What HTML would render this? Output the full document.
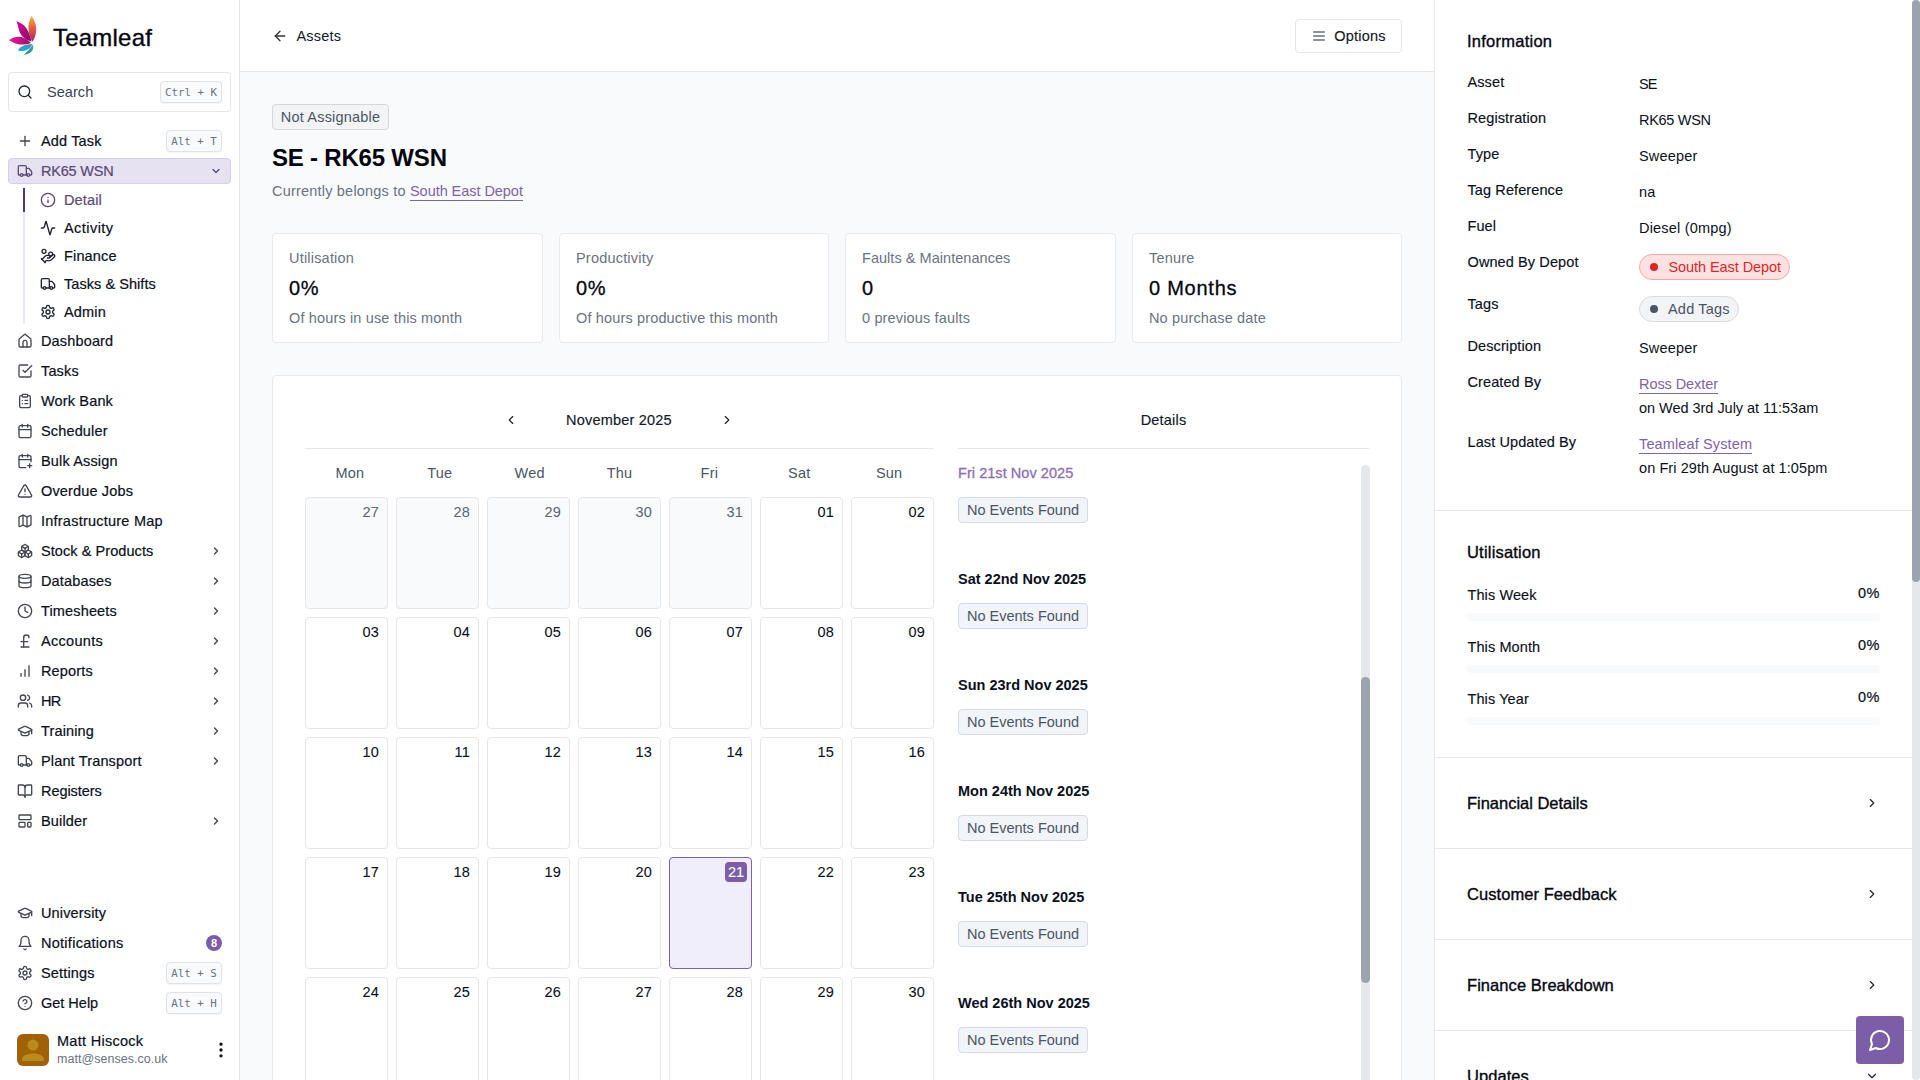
<!DOCTYPE html>
<html lang="en">
<head>
<meta charset="utf-8">
<title>SE - RK65 WSN | Teamleaf</title>
<style>
*{box-sizing:border-box;margin:0;padding:0}
html,body{width:1920px;height:1080px;overflow:hidden;background:#fff}
body{font-family:"Liberation Sans",Arial,sans-serif;font-size:14px;color:#0b1020;position:relative;-webkit-font-smoothing:antialiased}
svg.i{width:16px;height:16px;fill:none;stroke:currentColor;stroke-width:2;stroke-linecap:round;stroke-linejoin:round;display:block;flex:none}
a{color:inherit;text-decoration:none}
.abs{position:absolute}

/* ---------- sidebar ---------- */
#side{position:absolute;left:0;top:0;width:240px;height:1080px;background:#fff;border-right:1px solid #e5e7eb}
#logo{position:absolute;left:8px;top:14px}
#brand{position:absolute;left:53px;top:24px;font-size:24px;line-height:28px;color:#05060f;letter-spacing:.22px;-webkit-text-stroke:.35px #05060f}
#search{position:absolute;left:8px;top:72px;width:223px;height:40px;border:1px solid #e5e7eb;border-radius:4px;background:#fff}
#search svg{position:absolute;left:7.500px;top:11px;color:#1f2430}
#search span.t{position:absolute;left:38px;top:10px;line-height:18px;font-size:14.5px;color:#3b4254;letter-spacing:.05px}
kbd{position:absolute;font-family:"DejaVu Sans Mono","Liberation Mono",monospace;font-size:10.800px;line-height:21.500px;height:22px;border:1px solid #dfe2e8;border-radius:4px;background:#f9fafb;color:#6b7280;text-align:center;white-space:pre;box-shadow:0 1px 1px rgba(0,0,0,.04)}
.nav{position:absolute;left:8px;width:223px;height:28px;display:flex;align-items:center;padding-left:9px;color:#0b1020;font-size:14.5px;letter-spacing:.15px;white-space:nowrap;-webkit-text-stroke:.2px currentColor}
.nav svg.i{margin-right:8px;color:#44474f}
.nav svg.chev{position:absolute;right:9px;top:8px;width:12px;height:12px;color:#4a4e57;margin:0;stroke-width:3}
.nav.act svg.chev{right:7.900px;top:5.800px;color:#75668f;stroke-width:2.600}
.nav.sub{left:31px;width:200px}
.nav.sub svg.i{margin-right:8px;color:#1f2430}
.nav.act{background:#e6e2f1;border:1px solid #d5cde9;border-radius:4px;color:#5a4a78}
.nav.act svg.i{color:#5a4a78}
#subline{position:absolute;left:23px;top:188px;width:2px;height:136px;background:#e9eaf1}
#subline b{position:absolute;left:0;top:0;width:2px;height:24px;background:#4e3b73;display:block}
#badge8{position:absolute;left:206px;top:935px;width:16px;height:16px;border-radius:8px;background:#7b5ea7;color:#fff;font-size:11px;line-height:16px;text-align:center;font-weight:bold}
#avatar{position:absolute;left:17px;top:1034px;width:32px;height:32px;border-radius:6px;background:#a16207;overflow:hidden}
#uname{position:absolute;left:57px;top:1032px;font-size:14.5px;line-height:18px;color:#0b1020;letter-spacing:.28px;-webkit-text-stroke:.2px currentColor}
#umail{position:absolute;left:57px;top:1051px;font-size:12.5px;line-height:16px;color:#6b7280;letter-spacing:.04px}
#dots{position:absolute;left:210.700px;top:1040.400px;color:#111;width:20px !important;height:20px !important}

/* ---------- main ---------- */
#main{position:absolute;left:240px;top:0;width:1195px;height:1080px;background:#f9fafb;overflow:hidden}
#top{position:absolute;left:0;top:0;width:1195px;height:72px;background:#fff;border-bottom:1px solid #e5e7eb}

.back{position:absolute;left:32px;top:26px;height:20px;display:flex;align-items:center;font-size:14.5px;color:#111827;letter-spacing:.2px}
.back svg{width:16px;height:16px;margin-right:8.500px;color:#333}
.optbtn{position:absolute;left:1055px;top:19px;width:107px;height:34px;border:1px solid #e5e7eb;border-radius:4px;background:#fff;display:flex;align-items:center;justify-content:center;font-size:14.5px;color:#111827;letter-spacing:.2px;-webkit-text-stroke:.15px currentColor}
.optbtn svg{width:16px;height:16px;margin-right:7px;color:#6a6d75;stroke-width:2.200}
.pill-na{position:absolute;left:32px;top:104px;width:117px;height:26px;border:1px solid #d4d7dc;border-radius:4px;background:#f3f4f6;color:#4b5563;font-size:14.5px;line-height:24px;text-align:center;letter-spacing:.2px}
#title{position:absolute;left:32px;top:142px;font-size:24px;line-height:32px;font-weight:bold;color:#05060f;letter-spacing:-.2px;white-space:nowrap}
#belongs{position:absolute;left:32px;top:181px;font-size:14.5px;line-height:20px;color:#6b7280;letter-spacing:.2px;white-space:nowrap}
.lnk{color:#7d63a8;border-bottom:1px solid #7d63a8;padding-bottom:1px}
.stat{position:absolute;top:233px;width:271px;height:110px;background:#fff;border:1px solid #e7e9ed;border-radius:4px}
.stat .l{position:absolute;left:16px;top:14px;font-size:14.5px;line-height:20px;color:#6b7280;letter-spacing:.2px;white-space:nowrap}
.stat .v{position:absolute;left:16px;top:40px;font-size:20px;line-height:28px;color:#05060f;letter-spacing:.75px;white-space:nowrap;-webkit-text-stroke:.3px currentColor}
.stat .s{position:absolute;left:16px;top:74px;font-size:14.5px;line-height:20px;color:#6b7280;letter-spacing:.15px;white-space:nowrap}
#calcard{position:absolute;left:32px;top:375px;width:1130px;height:760px;background:#fff;border:1px solid #e7e9ed;border-radius:4px}
.calhead{text-align:center;font-size:14.5px;line-height:20px;color:#111827;letter-spacing:.2px;-webkit-text-stroke:.15px currentColor}
.hr{height:1px;background:#e5e7eb}
.dow{display:flex;width:629px}
.dow span{flex:1;text-align:center;font-size:14.5px;line-height:20px;color:#4b5563;letter-spacing:.2px}
#grid{position:absolute;left:32px;top:121px;width:640px;display:flex;flex-wrap:wrap}
.c{width:83px;height:112px;margin:0 8px 8px 0;border:1px solid #e5e7eb;border-radius:4px;background:#fff;text-align:right;padding:4px 8px 0 0;font-size:14.5px;line-height:20px;color:#0b1020;letter-spacing:.2px;-webkit-text-stroke:.08px currentColor}
.c.o{background:#f9fafb;color:#5b6472;-webkit-text-stroke:0}
.c.t{background:#f0eefa;border-color:#7d63a8;padding:4px 4px 0 0}
.c.t b{display:inline-block;width:22px;height:20px;border-radius:4px;background:#7b5ea7;color:#fff;font-weight:normal;text-align:center;line-height:20px;letter-spacing:0}
#evlist{position:absolute;left:685px;top:87px}
.ev{height:106px}
.ev .d{font-size:14.5px;line-height:20px;font-weight:bold;color:#0b1020;letter-spacing:0;white-space:nowrap}
.ev .d.first{font-weight:normal;color:#8b6fb5;-webkit-text-stroke:.3px currentColor;letter-spacing:.05px}
.ne{display:block;margin-top:14px;width:130px;height:26px;border:1px solid #d5dbe5;border-radius:4px;background:#f1f4f9;color:#4b5563;font-size:14.5px;line-height:24px;text-align:center;letter-spacing:0}
#evscroll{position:absolute;left:1087.500px;top:89px;width:9px;height:700px;background:#e5e7eb;border-radius:5px 5px 0 0}
#evscroll b{display:block;position:absolute;left:0;top:212px;width:9px;height:306px;background:#9ca3af;border-radius:5px}

/* ---------- right ---------- */
#right{position:absolute;left:1434px;top:0;width:478px;height:1080px;background:#fff;border-left:1px solid #e5e7eb;overflow:hidden}
#vscroll{position:absolute;left:1912px;top:0;width:8px;height:1080px;background:#e5e7eb;border-radius:4px}
#vscroll b{position:absolute;left:0;top:0;width:8px;height:582px;background:#9ca3af;border-radius:4px;display:block}
#right .h{position:absolute;left:32px;font-size:16.5px;line-height:24px;color:#05060f;letter-spacing:.06px;white-space:nowrap;-webkit-text-stroke:.35px currentColor}
#right .k{position:absolute;left:32.500px;font-size:14.5px;line-height:20px;color:#0b1020;letter-spacing:.1px;white-space:nowrap;-webkit-text-stroke:.15px currentColor}
#right .val{position:absolute;left:204px;font-size:14.5px;line-height:20px;color:#0b1020;letter-spacing:.2px;white-space:nowrap}
#right .pct{position:absolute;right:32px;font-size:14.5px;line-height:20px;color:#0b1020;letter-spacing:.5px;white-space:nowrap;-webkit-text-stroke:.2px currentColor}
#right .bar{position:absolute;left:32px;width:413px;height:8px;border-radius:4px;background:#f8f9fb}
#right .sep{position:absolute;left:0;width:478px;height:1px;background:#e5e7eb}
#right .ch{position:absolute;left:430px;width:14px;height:14px;color:#1f2430;stroke-width:2}
.tag{position:absolute;left:204px;height:26px;border-radius:13px;font-size:14.5px;line-height:24px;letter-spacing:.2px;white-space:nowrap;padding-left:29px}
.tag i{position:absolute;left:10px;top:8px;width:8px;height:8px;border-radius:4px;display:block}
.tag.red{background:#fee2e2;border:1px solid #fca5a5;color:#dc2626}
.tag.red i{background:#dc2626}
.tag.grey{background:#f3f4f6;border:1px solid #d9dce1;color:#4b5563}
.tag.grey i{background:#4b5563}
#chat{position:absolute;left:1856px;top:1016px;width:48px;height:48px;border-radius:4px;background:#7b5ea7;color:#fff}
#chat svg{position:absolute;left:12px;top:12px;width:24px;height:24px;stroke-width:2}
</style>
</head>
<body>

<!-- ================= SIDEBAR ================= -->
<div id="side">
  <svg id="logo" width="36" height="44" viewBox="0 0 36 44">
    <defs>
      <linearGradient id="g1" x1="0" y1="0" x2="0" y2="1"><stop offset="0" stop-color="#fbb034"/><stop offset=".45" stop-color="#e8613c"/><stop offset="1" stop-color="#b3206a"/></linearGradient>
      <linearGradient id="g2" x1="0" y1="0" x2="1" y2="1"><stop offset="0" stop-color="#e6009a"/><stop offset="1" stop-color="#7a1560"/></linearGradient>
      <linearGradient id="g3" x1="0" y1="0" x2="1" y2="0"><stop offset="0" stop-color="#f012b0"/><stop offset="1" stop-color="#a0125f"/></linearGradient>
      <linearGradient id="g4" x1="0" y1="0" x2="1" y2="0"><stop offset="0" stop-color="#19b5e0"/><stop offset="1" stop-color="#3f93b0"/></linearGradient>
      <linearGradient id="g5" x1="0" y1="1" x2="1" y2="0"><stop offset="0" stop-color="#0f8f86"/><stop offset="1" stop-color="#3aa0c4"/></linearGradient>
    </defs>
    <path d="M23.5 2 C27.2 7 29.8 14 27.2 22 C26.2 25 25.2 27 24.400 27.600 C20.300 21 18.600 11 23.500 2Z" fill="url(#g1)"/>
    <path d="M8.3 7.3 C14 9 18.5 13 20.5 18 C22 22 23 25 23.6 27.6 C17 26 12.5 21.5 11 16 C10 12.5 9.5 9.5 8.3 7.3Z" fill="url(#g2)"/>
    <path d="M0.8 26.3 C6 22.5 12 22 16 24 C19 25.5 21.5 27.5 23 29 C17 31.2 11 31 7 29.3 C4.5 28.2 2.5 27 0.8 26.3Z" fill="url(#g3)"/>
    <path d="M9.900 36.400 C12.500 32 17 30.300 24.500 30 C22.500 35 17.500 38.200 9.900 36.400Z" fill="url(#g4)"/>
    <path d="M15.900 40.800 C18.500 38.500 22 35 25 30.600 C26.300 35.500 23.500 40.200 15.900 40.800Z" fill="url(#g5)"/>
  </svg>
  <div id="brand">Teamleaf</div>

  <div id="search">
    <svg class="i" viewBox="0 0 24 24"><circle cx="11" cy="11" r="8"/><path d="m21 21-4.3-4.3"/></svg>
    <span class="t">Search</span>
    <kbd style="left:151px;top:8px;width:62px">Ctrl + K</kbd>
  </div>

  <div class="nav" style="top:127px"><svg class="i" viewBox="0 0 24 24"><path d="M5 12h14"/><path d="M12 5v14"/></svg>Add Task</div>
  <kbd style="left:166px;top:130px;width:56px">Alt + T</kbd>

  <div class="nav act" style="top:158px;height:26px;padding-left:8px;letter-spacing:-.2px"><svg class="i" viewBox="0 0 24 24"><path d="M14 18V6a2 2 0 0 0-2-2H4a2 2 0 0 0-2 2v11a1 1 0 0 0 1 1h2"/><path d="M15 18H9"/><path d="M19 18h2a1 1 0 0 0 1-1v-3.65a1 1 0 0 0-.22-.624l-3.48-4.35A1 1 0 0 0 17.52 8H14"/><circle cx="17" cy="18" r="2"/><circle cx="7" cy="18" r="2"/></svg>RK65 WSN<svg class="i chev" viewBox="0 0 24 24"><path d="m6 9 6 6 6-6"/></svg></div>

  <div id="subline"><b></b></div>
  <div class="nav sub" style="top:186px;color:#5a4a78"><svg class="i" style="color:#5a4a78" viewBox="0 0 24 24"><circle cx="12" cy="12" r="10"/><path d="M12 16v-4"/><path d="M12 8h.01"/></svg>Detail</div>
  <div class="nav sub" style="top:214px"><svg class="i" viewBox="0 0 24 24"><path d="M22 12h-2.48a2 2 0 0 0-1.93 1.46l-2.35 8.36a.25.25 0 0 1-.48 0L9.24 2.18a.25.25 0 0 0-.48 0l-2.35 8.36A2 2 0 0 1 4.49 12H2"/></svg><span style="letter-spacing:.45px">Activity</span></div>
  <div class="nav sub" style="top:242px"><svg class="i" viewBox="0 0 24 24"><path d="M11 15h2a2 2 0 1 0 0-4h-3c-.6 0-1.1.2-1.4.6L3 17"/><path d="m7 21 1.6-1.4c.3-.4.8-.6 1.4-.6h4c1.1 0 2.100-.4 2.800-1.200l4.600-4.400a2 2 0 0 0-2.750-2.910l-4.200 3.900"/><path d="m2 16 6 6"/><circle cx="16" cy="9" r="2.900"/><circle cx="6" cy="5" r="3"/></svg>Finance</div>
  <div class="nav sub" style="top:270px"><svg class="i" viewBox="0 0 24 24"><path d="M14 18V6a2 2 0 0 0-2-2H4a2 2 0 0 0-2 2v11a1 1 0 0 0 1 1h2"/><path d="M15 18H9"/><path d="M19 18h2a1 1 0 0 0 1-1v-3.65a1 1 0 0 0-.22-.624l-3.48-4.35A1 1 0 0 0 17.52 8H14"/><circle cx="17" cy="18" r="2"/><circle cx="7" cy="18" r="2"/></svg><span style="letter-spacing:.05px">Tasks &amp; Shifts</span></div>
  <div class="nav sub" style="top:298px"><svg class="i" viewBox="0 0 24 24"><path d="M12.22 2h-.44a2 2 0 0 0-2 2v.18a2 2 0 0 1-1 1.730l-.43.250a2 2 0 0 1-2 0l-.15-.08a2 2 0 0 0-2.730.730l-.22.380a2 2 0 0 0 .730 2.730l.15.100a2 2 0 0 1 1 1.720v.510a2 2 0 0 1-1 1.740l-.15.090a2 2 0 0 0-.730 2.730l.22.380a2 2 0 0 0 2.730.730l.15-.08a2 2 0 0 1 2 0l.43.250a2 2 0 0 1 1 1.730V20a2 2 0 0 0 2 2h.44a2 2 0 0 0 2-2v-.18a2 2 0 0 1 1-1.730l.43-.250a2 2 0 0 1 2 0l.15.080a2 2 0 0 0 2.730-.730l.22-.390a2 2 0 0 0-.730-2.730l-.15-.080a2 2 0 0 1-1-1.740v-.500a2 2 0 0 1 1-1.740l.15-.090a2 2 0 0 0 .730-2.730l-.22-.380a2 2 0 0 0-2.730-.730l-.15.080a2 2 0 0 1-2 0l-.43-.250a2 2 0 0 1-1-1.730V4a2 2 0 0 0-2-2z"/><circle cx="12" cy="12" r="3"/></svg>Admin</div>

  <div class="nav" style="top:327px"><svg class="i" viewBox="0 0 24 24"><path d="M9 21v-7a3 3 0 0 1 6 0v7"/><path d="M3 10a2 2 0 0 1 .709-1.528l7-5.999a2 2 0 0 1 2.582 0l7 5.999A2 2 0 0 1 21 10v9a2 2 0 0 1-2 2H5a2 2 0 0 1-2-2z"/></svg>Dashboard</div>
  <div class="nav" style="top:357px"><svg class="i" viewBox="0 0 24 24"><path d="m9 11 3 3L22 4"/><path d="M21 12v7a2 2 0 0 1-2 2H5a2 2 0 0 1-2-2V5a2 2 0 0 1 2-2h11"/></svg>Tasks</div>
  <div class="nav" style="top:387px"><svg class="i" viewBox="0 0 24 24"><rect width="8" height="4" x="8" y="2" rx="1" ry="1"/><path d="M16 4h2a2 2 0 0 1 2 2v14a2 2 0 0 1-2 2H6a2 2 0 0 1-2-2V6a2 2 0 0 1 2-2h2"/><path d="M12 11h4"/><path d="M12 16h4"/><path d="M8 11h.01"/><path d="M8 16h.01"/></svg>Work Bank</div>
  <div class="nav" style="top:417px"><svg class="i" viewBox="0 0 24 24"><path d="M8 2v4"/><path d="M16 2v4"/><rect width="18" height="18" x="3" y="4" rx="2"/><path d="M3 10h18"/></svg>Scheduler</div>
  <div class="nav" style="top:447px"><svg class="i" viewBox="0 0 24 24"><path d="M8 2v4"/><path d="M16 2v4"/><path d="M21 13V6a2 2 0 0 0-2-2H5a2 2 0 0 0-2 2v14a2 2 0 0 0 2 2h8"/><path d="M3 10h18"/><path d="M16 19h6"/><path d="M19 16v6"/></svg>Bulk Assign</div>
  <div class="nav" style="top:477px"><svg class="i" viewBox="0 0 24 24"><path d="m21.730 18-8-14a2 2 0 0 0-3.480 0l-8 14A2 2 0 0 0 4 21h16a2 2 0 0 0 1.730-3"/><path d="M12 9v4"/><path d="M12 17h.01"/></svg>Overdue Jobs</div>
  <div class="nav" style="top:507px"><svg class="i" viewBox="0 0 24 24"><path d="M14.106 5.553a2 2 0 0 0 1.788 0l3.659-1.830A1 1 0 0 1 21 4.619v12.764a1 1 0 0 1-.553.894l-4.553 2.277a2 2 0 0 1-1.788 0l-4.212-2.106a2 2 0 0 0-1.788 0l-3.659 1.830A1 1 0 0 1 3 19.381V6.618a1 1 0 0 1 .553-.894l4.553-2.277a2 2 0 0 1 1.788 0z"/><path d="M15 5.764v15"/><path d="M9 3.236v15"/></svg><span style="letter-spacing:.23px">Infrastructure Map</span></div>
  <div class="nav" style="top:537px"><svg class="i" viewBox="0 0 24 24"><path d="M2.970 12.920A2 2 0 0 0 2 14.630v3.240a2 2 0 0 0 .970 1.710l3 1.800a2 2 0 0 0 2.060 0L12 19v-5.500l-5-3-4.030 2.420Z"/><path d="m7 16.500-4.740-2.850"/><path d="m7 16.500 5-3"/><path d="M7 16.500v5.170"/><path d="M12 13.500V19l3.970 2.380a2 2 0 0 0 2.060 0l3-1.800a2 2 0 0 0 .970-1.710v-3.240a2 2 0 0 0-.970-1.710L17 10.500l-5 3Z"/><path d="m17 16.500-5-3"/><path d="m17 16.500 4.740-2.850"/><path d="M17 16.500v5.170"/><path d="M7.970 4.420A2 2 0 0 0 7 6.130v4.370l5 3 5-3V6.130a2 2 0 0 0-.970-1.710l-3-1.800a2 2 0 0 0-2.060 0l-3 1.800Z"/><path d="M12 8 7.260 5.150"/><path d="m12 8 4.740-2.850"/><path d="M12 13.500V8"/></svg><span style="letter-spacing:.07px">Stock &amp; Products</span><svg class="i chev" viewBox="0 0 24 24"><path d="m9 18 6-6-6-6"/></svg></div>
  <div class="nav" style="top:567px"><svg class="i" viewBox="0 0 24 24"><ellipse cx="12" cy="5" rx="9" ry="3"/><path d="M3 5V19A9 3 0 0 0 21 19V5"/><path d="M3 12A9 3 0 0 0 21 12"/></svg>Databases<svg class="i chev" viewBox="0 0 24 24"><path d="m9 18 6-6-6-6"/></svg></div>
  <div class="nav" style="top:597px"><svg class="i" viewBox="0 0 24 24"><circle cx="12" cy="12" r="10"/><polyline points="12 6 12 12 16 14"/></svg>Timesheets<svg class="i chev" viewBox="0 0 24 24"><path d="m9 18 6-6-6-6"/></svg></div>
  <div class="nav" style="top:627px"><svg class="i" viewBox="0 0 24 24"><path d="M18 7c0-5.333-8-5.333-8 0"/><path d="M10 7v14"/><path d="M6 21h12"/><path d="M6 13h10"/></svg><span style="letter-spacing:.3px">Accounts</span><svg class="i chev" viewBox="0 0 24 24"><path d="m9 18 6-6-6-6"/></svg></div>
  <div class="nav" style="top:657px"><svg class="i" viewBox="0 0 24 24"><line x1="12" x2="12" y1="20" y2="10"/><line x1="18" x2="18" y1="20" y2="4"/><line x1="6" x2="6" y1="20" y2="16"/></svg>Reports<svg class="i chev" viewBox="0 0 24 24"><path d="m9 18 6-6-6-6"/></svg></div>
  <div class="nav" style="top:687px"><svg class="i" viewBox="0 0 24 24"><path d="M16 21v-2a4 4 0 0 0-4-4H6a4 4 0 0 0-4 4v2"/><circle cx="9" cy="7" r="4"/><path d="M22 21v-2a4 4 0 0 0-3-3.870"/><path d="M16 3.130a4 4 0 0 1 0 7.750"/></svg><span style="letter-spacing:-.6px">HR</span><svg class="i chev" viewBox="0 0 24 24"><path d="m9 18 6-6-6-6"/></svg></div>
  <div class="nav" style="top:717px"><svg class="i" viewBox="0 0 24 24"><path d="M21.420 10.922a1 1 0 0 0-.019-1.838L12.830 5.180a2 2 0 0 0-1.660 0L2.600 9.080a1 1 0 0 0 0 1.832l8.570 3.908a2 2 0 0 0 1.660 0z"/><path d="M22 10v6"/><path d="M6 12.500V16a6 3 0 0 0 12 0v-3.500"/></svg>Training<svg class="i chev" viewBox="0 0 24 24"><path d="m9 18 6-6-6-6"/></svg></div>
  <div class="nav" style="top:747px"><svg class="i" viewBox="0 0 24 24"><path d="M14 18V6a2 2 0 0 0-2-2H4a2 2 0 0 0-2 2v11a1 1 0 0 0 1 1h2"/><path d="M15 18H9"/><path d="M19 18h2a1 1 0 0 0 1-1v-3.650a1 1 0 0 0-.220-.624l-3.480-4.350A1 1 0 0 0 17.520 8H14"/><circle cx="17" cy="18" r="2"/><circle cx="7" cy="18" r="2"/></svg>Plant Transport<svg class="i chev" viewBox="0 0 24 24"><path d="m9 18 6-6-6-6"/></svg></div>
  <div class="nav" style="top:777px"><svg class="i" viewBox="0 0 24 24"><path d="M12 7v14"/><path d="M3 18a1 1 0 0 1-1-1V4a1 1 0 0 1 1-1h5a4 4 0 0 1 4 4 4 4 0 0 1 4-4h5a1 1 0 0 1 1 1v13a1 1 0 0 1-1 1h-6a3 3 0 0 0-3 3 3 3 0 0 0-3-3z"/></svg><span style="letter-spacing:-.05px">Registers</span></div>
  <div class="nav" style="top:807px"><svg class="i" viewBox="0 0 24 24"><rect width="18" height="7" x="3" y="3" rx="1"/><rect width="9" height="7" x="3" y="14" rx="1"/><rect width="5" height="7" x="16" y="14" rx="1"/></svg>Builder<svg class="i chev" viewBox="0 0 24 24"><path d="m9 18 6-6-6-6"/></svg></div>

  <div class="nav" style="top:899px"><svg class="i" viewBox="0 0 24 24"><path d="M21.420 10.922a1 1 0 0 0-.019-1.838L12.830 5.180a2 2 0 0 0-1.660 0L2.600 9.080a1 1 0 0 0 0 1.832l8.570 3.908a2 2 0 0 0 1.660 0z"/><path d="M22 10v6"/><path d="M6 12.500V16a6 3 0 0 0 12 0v-3.500"/></svg>University</div>
  <div class="nav" style="top:929px"><svg class="i" viewBox="0 0 24 24"><path d="M6 8a6 6 0 0 1 12 0c0 7 3 9 3 9H3s3-2 3-9"/><path d="M10.300 21a1.940 1.940 0 0 0 3.400 0"/></svg><span style="letter-spacing:.27px">Notifications</span></div>
  <div id="badge8">8</div>
  <div class="nav" style="top:959px"><svg class="i" viewBox="0 0 24 24"><path d="M12.22 2h-.44a2 2 0 0 0-2 2v.18a2 2 0 0 1-1 1.730l-.43.250a2 2 0 0 1-2 0l-.15-.08a2 2 0 0 0-2.730.730l-.22.380a2 2 0 0 0 .730 2.730l.15.100a2 2 0 0 1 1 1.720v.510a2 2 0 0 1-1 1.740l-.15.090a2 2 0 0 0-.730 2.730l.22.380a2 2 0 0 0 2.730.730l.15-.08a2 2 0 0 1 2 0l.43.250a2 2 0 0 1 1 1.730V20a2 2 0 0 0 2 2h.44a2 2 0 0 0 2-2v-.18a2 2 0 0 1 1-1.730l.43-.250a2 2 0 0 1 2 0l.15.080a2 2 0 0 0 2.730-.730l.22-.390a2 2 0 0 0-.730-2.730l-.15-.080a2 2 0 0 1-1-1.740v-.500a2 2 0 0 1 1-1.740l.15-.090a2 2 0 0 0 .730-2.730l-.22-.380a2 2 0 0 0-2.730-.730l-.15.080a2 2 0 0 1-2 0l-.43-.250a2 2 0 0 1-1-1.730V4a2 2 0 0 0-2-2z"/><circle cx="12" cy="12" r="3"/></svg>Settings</div>
  <kbd style="left:166px;top:962px;width:56px">Alt + S</kbd>
  <div class="nav" style="top:989px"><svg class="i" viewBox="0 0 24 24"><circle cx="12" cy="12" r="10"/><path d="M9.090 9a3 3 0 0 1 5.830 1c0 2-3 3-3 3"/><path d="M12 17h.01"/></svg><span style="letter-spacing:-.01px">Get Help</span></div>
  <kbd style="left:166px;top:992px;width:56px">Alt + H</kbd>


  <div id="avatar"><svg width="32" height="32" viewBox="0 0 32 32"><circle cx="16" cy="11" r="5.5" fill="#b98a1c"/><path d="M6 27c-.6 0-1-.4-1-1 0-4.300 4.500-6.500 11-6.500s11 2.200 11 6.500c0 .6-.4 1-1 1z" fill="#b98a1c"/></svg></div>
  <div id="uname">Matt Hiscock</div>
  <div id="umail">matt@senses.co.uk</div>
  <svg id="dots" class="i" viewBox="0 0 24 24" style="stroke-width:2"><circle cx="12" cy="12" r="1"/><circle cx="12" cy="5" r="1"/><circle cx="12" cy="19" r="1"/></svg>
</div>

<!-- ================= MAIN ================= -->
<div id="main">
  <div id="top">
    <div class="back"><svg class="i" viewBox="0 0 24 24"><path d="m12 19-7-7 7-7"/><path d="M19 12H5"/></svg><span>Assets</span></div>
    <div class="optbtn"><svg class="i" viewBox="0 0 24 24"><line x1="4" x2="20" y1="12" y2="12"/><line x1="4" x2="20" y1="6" y2="6"/><line x1="4" x2="20" y1="18" y2="18"/></svg><span>Options</span></div>
  </div>
  <div class="pill-na">Not Assignable</div>
  <h1 id="title">SE - RK65 WSN</h1>
  <div id="belongs">Currently belongs to <a class="lnk" style="letter-spacing:-.05px">South East Depot</a></div>

  <div class="stat" style="left:32px"><div class="l">Utilisation</div><div class="v">0%</div><div class="s">Of hours in use this month</div></div>
  <div class="stat" style="left:319px;width:270px"><div class="l">Productivity</div><div class="v">0%</div><div class="s">Of hours productive this month</div></div>
  <div class="stat" style="left:605px"><div class="l" style="letter-spacing:.04px">Faults &amp; Maintenances</div><div class="v">0</div><div class="s">0 previous faults</div></div>
  <div class="stat" style="left:892px;width:270px"><div class="l">Tenure</div><div class="v">0 Months</div><div class="s">No purchase date</div></div>

  <div id="calcard">
    <!-- calendar -->
    <svg class="i abs" style="left:231px;top:37px;width:14px;height:14px;color:#222;stroke-width:2" viewBox="0 0 24 24"><path d="m15 18-6-6 6-6"/></svg>
    <div class="abs calhead" style="left:246px;width:200px;top:34px">November 2025</div>
    <svg class="i abs" style="left:447px;top:37px;width:14px;height:14px;color:#222;stroke-width:2" viewBox="0 0 24 24"><path d="m9 18 6-6-6-6"/></svg>
    <div class="abs hr" style="left:32px;top:72px;width:629px"></div>
    <div class="abs dow" style="left:32px;top:87px">
      <span>Mon</span><span>Tue</span><span>Wed</span><span>Thu</span><span>Fri</span><span>Sat</span><span>Sun</span>
    </div>
    <div id="grid">
      <div class="c o">27</div><div class="c o">28</div><div class="c o">29</div><div class="c o">30</div><div class="c o">31</div><div class="c">01</div><div class="c">02</div>
      <div class="c">03</div><div class="c">04</div><div class="c">05</div><div class="c">06</div><div class="c">07</div><div class="c">08</div><div class="c">09</div>
      <div class="c">10</div><div class="c">11</div><div class="c">12</div><div class="c">13</div><div class="c">14</div><div class="c">15</div><div class="c">16</div>
      <div class="c">17</div><div class="c">18</div><div class="c">19</div><div class="c">20</div><div class="c t"><b>21</b></div><div class="c">22</div><div class="c">23</div>
      <div class="c">24</div><div class="c">25</div><div class="c">26</div><div class="c">27</div><div class="c">28</div><div class="c">29</div><div class="c">30</div>
    </div>
    <!-- details -->
    <div class="abs calhead" style="left:685px;width:411px;top:34px">Details</div>
    <div class="abs hr" style="left:685px;top:72px;width:411px"></div>
    <div id="evlist">
      <div class="ev"><div class="d first">Fri 21st Nov 2025</div><span class="ne">No Events Found</span></div>
      <div class="ev"><div class="d">Sat 22nd Nov 2025</div><span class="ne">No Events Found</span></div>
      <div class="ev"><div class="d">Sun 23rd Nov 2025</div><span class="ne">No Events Found</span></div>
      <div class="ev"><div class="d">Mon 24th Nov 2025</div><span class="ne">No Events Found</span></div>
      <div class="ev"><div class="d">Tue 25th Nov 2025</div><span class="ne">No Events Found</span></div>
      <div class="ev"><div class="d">Wed 26th Nov 2025</div><span class="ne">No Events Found</span></div>
    </div>
    <div id="evscroll"><b></b></div>
  </div>
</div>

<!-- ================= RIGHT ================= -->
<div id="right">
  <div class="h" style="top:29px;letter-spacing:.25px">Information</div>
  <div class="k" style="top:72px">Asset</div><div class="val" style="top:74px;letter-spacing:-.8px">SE</div>
  <div class="k" style="top:108px">Registration</div><div class="val" style="top:110px;letter-spacing:-.3px">RK65 WSN</div>
  <div class="k" style="top:144px">Type</div><div class="val" style="top:146px">Sweeper</div>
  <div class="k" style="top:180px">Tag Reference</div><div class="val" style="top:182px">na</div>
  <div class="k" style="top:216px">Fuel</div><div class="val" style="top:218px">Diesel (0mpg)</div>
  <div class="k" style="top:252px">Owned By Depot</div><div class="tag red" style="top:254px;width:151px;letter-spacing:-.07px;padding-left:28.500px"><i></i>South East Depot</div>
  <div class="k" style="top:294px">Tags</div><div class="tag grey" style="top:296px;width:100px;padding-left:28px"><i></i>Add Tags</div>
  <div class="k" style="top:336px">Description</div><div class="val" style="top:338px">Sweeper</div>
  <div class="k" style="top:372px">Created By</div><div class="val" style="top:374px"><a class="lnk" style="letter-spacing:-.08px">Ross Dexter</a></div>
  <div class="val" style="top:398px;letter-spacing:-.03px">on Wed 3rd July at 11:53am</div>
  <div class="k" style="top:432px">Last Updated By</div><div class="val" style="top:434px"><a class="lnk" style="letter-spacing:.13px">Teamleaf System</a></div>
  <div class="val" style="top:458px;letter-spacing:.08px">on Fri 29th August at 1:05pm</div>
  <div class="sep" style="top:510px"></div>

  <div class="h" style="top:540px;letter-spacing:.2px">Utilisation</div>
  <div class="k" style="top:585px">This Week</div><div class="pct" style="top:583px">0%</div><div class="bar" style="top:613px"></div>
  <div class="k" style="top:637px">This Month</div><div class="pct" style="top:635px">0%</div><div class="bar" style="top:665px"></div>
  <div class="k" style="top:689px">This Year</div><div class="pct" style="top:687px">0%</div><div class="bar" style="top:717px"></div>
  <div class="sep" style="top:757px"></div>

  <div class="h" style="top:791px;letter-spacing:-.02px">Financial Details</div><svg class="i ch" style="top:796px" viewBox="0 0 24 24"><path d="m9 18 6-6-6-6"/></svg>
  <div class="sep" style="top:848px"></div>
  <div class="h" style="top:882px">Customer Feedback</div><svg class="i ch" style="top:887px" viewBox="0 0 24 24"><path d="m9 18 6-6-6-6"/></svg>
  <div class="sep" style="top:939px"></div>
  <div class="h" style="top:973px">Finance Breakdown</div><svg class="i ch" style="top:978px" viewBox="0 0 24 24"><path d="m9 18 6-6-6-6"/></svg>
  <div class="sep" style="top:1030px"></div>
  <div class="h" style="top:1064px">Updates</div><svg class="i ch" style="top:1069px" viewBox="0 0 24 24"><path d="m6 9 6 6 6-6"/></svg>
</div>
<div id="vscroll"><b></b></div>
<div id="chat"><svg class="i" viewBox="0 0 24 24"><path d="M7.900 20A9 9 0 1 0 4 16.100L2 22Z"/></svg></div>
</body>
</html>
